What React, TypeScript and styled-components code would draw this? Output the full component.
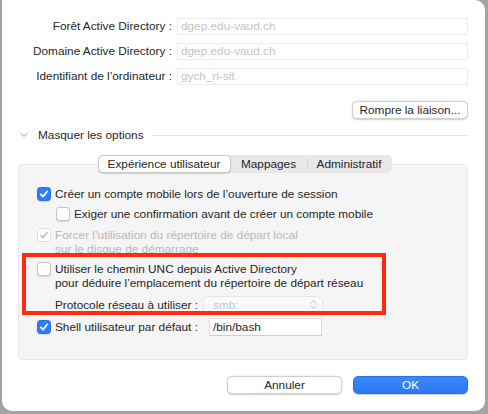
import React from "react";
import styled, { createGlobalStyle } from "styled-components";

const Global = createGlobalStyle`
  html, body { margin: 0; padding: 0; }
  body {
    background: #a3a3a3;
    width: 488px;
    height: 414px;
    overflow: hidden;
    font-family: "Liberation Sans", Arial, sans-serif;
    font-size: 11.8px;
    color: #262626;
    -webkit-font-smoothing: antialiased;
  }
`;

const Window = styled.div`
  box-sizing: border-box;
  margin: 0 3px 0 2px;
  width: 483px;
  height: 411px;
  background: #ffffff;
  border-radius: 0 10px 10px 10px;
  display: flex;
  flex-direction: column;
  padding-right: 17px;
`;

const FormGrid = styled.div`
  display: grid;
  grid-template-columns: 170px 1fr;
  column-gap: 5px;
  row-gap: 8px;
  padding-top: 18px;
  align-items: center;
`;

const Label = styled.div`
  text-align: right;
  white-space: nowrap;
  line-height: 17px;
`;

const Field = styled.div`
  box-sizing: border-box;
  height: 17px;
  border: 1px solid #ececec;
  background: #fff;
  color: #c4c4c4;
  padding-left: 3px;
  line-height: 15px;
`;

const RightRow = styled.div`
  display: flex;
  justify-content: flex-end;
  margin-top: 16px;
`;

const PushButton = styled.button<{ $w: number; $primary?: boolean }>`
  box-sizing: border-box;
  width: ${(p) => p.$w}px;
  height: 18px;
  border-radius: 5px;
  font-family: inherit;
  font-size: 11.8px;
  line-height: 16px;
  padding: 0;
  cursor: default;
  color: ${(p) => (p.$primary ? "#ffffff" : "#262626")};
  background: ${(p) =>
    p.$primary ? "linear-gradient(#3a88f8, #2d79f5)" : "#ffffff"};
  border: ${(p) => (p.$primary ? "0.5px solid #2a72e6" : "0.5px solid #cfcfcf")};
  box-shadow: 0 0.5px 1.5px rgba(0, 0, 0, 0.2);
`;

const OptionsHeader = styled.div`
  display: flex;
  align-items: center;
  margin-top: 8px;
  padding-left: 18px;
  height: 16px;
`;

const OptionsTitle = styled.span`
  margin-left: 10px;
  white-space: nowrap;
`;

const Rule = styled.div`
  flex: 1;
  height: 1px;
  background: #e3e3e3;
  margin-left: 8px;
`;

const Section = styled.div`
  margin-top: 12px;
  margin-left: 16px;
  display: flex;
  flex-direction: column;
  align-items: center;
`;

const Segmented = styled.div`
  position: relative;
  z-index: 1;
  display: flex;
  height: 18px;
  margin-left: 3px;
  background: #e8e8e8;
  border-radius: 5px;
  box-sizing: border-box;
`;

const Segment = styled.div<{ $w: number; $active?: boolean; $sep?: boolean }>`
  box-sizing: border-box;
  width: ${(p) => p.$w}px;
  height: 18px;
  display: flex;
  align-items: center;
  justify-content: center;
  border-radius: 5px;
  position: relative;
  background: ${(p) => (p.$active ? "#ffffff" : "transparent")};
  border: ${(p) => (p.$active ? "0.5px solid #c9c9c9" : "none")};
  box-shadow: ${(p) => (p.$active ? "0 0.5px 1px rgba(0,0,0,0.15)" : "none")};
  white-space: nowrap;
  &::before {
    content: "";
    display: ${(p) => (p.$sep ? "block" : "none")};
    position: absolute;
    left: 0;
    top: 4px;
    bottom: 4px;
    width: 1px;
    background: #d2d2d2;
  }
`;

const Group = styled.div`
  box-sizing: border-box;
  align-self: stretch;
  margin-top: -9px;
  height: 196px;
  background: #f5f5f5;
  border: 1px solid #e8e8e8;
  border-radius: 5px;
  padding: 22px 0 0 18px;
  display: flex;
  flex-direction: column;
`;

const CheckRow = styled.div<{ $indent?: boolean; $gap: number; $disabled?: boolean }>`
  display: flex;
  align-items: flex-start;
  margin-top: ${(p) => p.$gap}px;
  margin-left: ${(p) => (p.$indent ? 19 : 0)}px;
  line-height: 14px;
  color: ${(p) => (p.$disabled ? "#b8b8b8" : "#262626")};
`;

const Box = styled.span<{ $checked?: boolean; $disabled?: boolean }>`
  box-sizing: border-box;
  flex: none;
  width: 14px;
  height: 14px;
  border-radius: 3.5px;
  margin-right: 4px;
  display: flex;
  align-items: center;
  justify-content: center;
  background: ${(p) =>
    p.$checked && !p.$disabled ? "#2f7df6" : "#ffffff"};
  border: ${(p) =>
    p.$checked && !p.$disabled
      ? "0.5px solid #2a72e6"
      : p.$disabled
      ? "1px solid #dcdcdc"
      : "1px solid #c3c3c3"};
  box-shadow: ${(p) => (p.$disabled ? "none" : "0 0.5px 1px rgba(0,0,0,0.12)")};
`;

const Highlight = styled.div`
  position: relative;
  margin-top: 6px;
  display: flex;
  flex-direction: column;
`;

const RedFrame = styled.div`
  box-sizing: border-box;
  position: absolute;
  left: -15px;
  top: -9px;
  width: 364px;
  height: 62px;
  border: 4px solid #ff2a10;
  pointer-events: none;
`;

const InlineRow = styled.div<{ $gap: number; $label: number }>`
  display: flex;
  align-items: center;
  margin-top: ${(p) => p.$gap}px;
  & > span.lbl {
    width: ${(p) => p.$label}px;
    white-space: nowrap;
  }
`;

const Spacer = styled.span`
  width: 18px;
  flex: none;
`;

const Popup = styled.div`
  box-sizing: border-box;
  width: 120px;
  height: 17px;
  background: #fafafa;
  border: 0.5px solid #e6e6e6;
  border-radius: 5px;
  display: flex;
  align-items: center;
  justify-content: space-between;
  padding: 0 5px 0 9px;
  color: #c6c6c6;
`;

const TextInput = styled.div`
  box-sizing: border-box;
  width: 113px;
  height: 18px;
  background: #ffffff;
  border: 1px solid #dedede;
  border-bottom-color: #cfcfcf;
  padding-left: 3px;
  line-height: 16px;
  color: #262626;
`;

const Footer = styled.div`
  display: flex;
  justify-content: flex-end;
  gap: 11px;
  margin-top: 16px;
`;

const Check = ({ color }: { color: string }) => (
  <svg width="10" height="10" viewBox="0 0 10 10">
    <path
      d="M1.8 5.3 L4 7.6 L8.3 2.3"
      fill="none"
      stroke={color}
      strokeWidth="1.7"
      strokeLinecap="round"
      strokeLinejoin="round"
    />
  </svg>
);

const Chevron = () => (
  <svg width="8" height="6" viewBox="0 0 8 6">
    <path d="M1 1.5 L4 4.5 L7 1.5" fill="none" stroke="#9a9a9a" strokeWidth="1" strokeLinecap="round" strokeLinejoin="round" />
  </svg>
);

const UpDown = () => (
  <svg width="7" height="11" viewBox="0 0 7 11">
    <path d="M1 4 L3.5 1.5 L6 4 M1 7 L3.5 9.5 L6 7" fill="none" stroke="#b8b8b8" strokeWidth="1" strokeLinecap="round" strokeLinejoin="round" />
  </svg>
);

export default function App() {
  return (
    <>
      <Global />
      <Window>
        <FormGrid>
          <Label>Forêt Active Directory :</Label>
          <Field>dgep.edu-vaud.ch</Field>
          <Label>Domaine Active Directory :</Label>
          <Field>dgep.edu-vaud.ch</Field>
          <Label>Identifiant de l’ordinateur :</Label>
          <Field>gych_ri-sit</Field>
        </FormGrid>
        <RightRow>
          <PushButton $w={116}>Rompre la liaison...</PushButton>
        </RightRow>
        <OptionsHeader>
          <Chevron />
          <OptionsTitle>Masquer les options</OptionsTitle>
          <Rule />
        </OptionsHeader>
        <Section>
          <Segmented>
            <Segment $w={133} $active>Expérience utilisateur</Segment>
            <Segment $w={76}>Mappages</Segment>
            <Segment $w={85} $sep>Administratif</Segment>
          </Segmented>
          <Group>
            <CheckRow $gap={0}>
              <Box $checked><Check color="#fff" /></Box>
              <span>Créer un compte mobile lors de l’ouverture de session</span>
            </CheckRow>
            <CheckRow $gap={6} $indent>
              <Box />
              <span>Exiger une confirmation avant de créer un compte mobile</span>
            </CheckRow>
            <CheckRow $gap={7} $disabled>
              <Box $checked $disabled><Check color="#c4c4c4" /></Box>
              <span>
                Forcer l’utilisation du répertoire de départ local
                <br />
                sur le disque de démarrage
              </span>
            </CheckRow>
            <Highlight>
              <CheckRow $gap={0}>
                <Box />
                <span>
                  Utiliser le chemin UNC depuis Active Directory
                  <br />
                  pour déduire l’emplacement du répertoire de départ réseau
                </span>
              </CheckRow>
              <InlineRow $gap={6} $label={148}>
                <Spacer />
                <span className="lbl">Protocole réseau à utiliser :</span>
                <Popup>
                  <span>smb:</span>
                  <UpDown />
                </Popup>
              </InlineRow>
              <RedFrame />
            </Highlight>
            <InlineRow $gap={5} $label={154}>
              <Box $checked><Check color="#fff" /></Box>
              <span className="lbl">Shell utilisateur par défaut :</span>
              <TextInput>/bin/bash</TextInput>
            </InlineRow>
          </Group>
        </Section>
        <Footer>
          <PushButton $w={115}>Annuler</PushButton>
          <PushButton $w={115} $primary>OK</PushButton>
        </Footer>
      </Window>
    </>
  );
}
